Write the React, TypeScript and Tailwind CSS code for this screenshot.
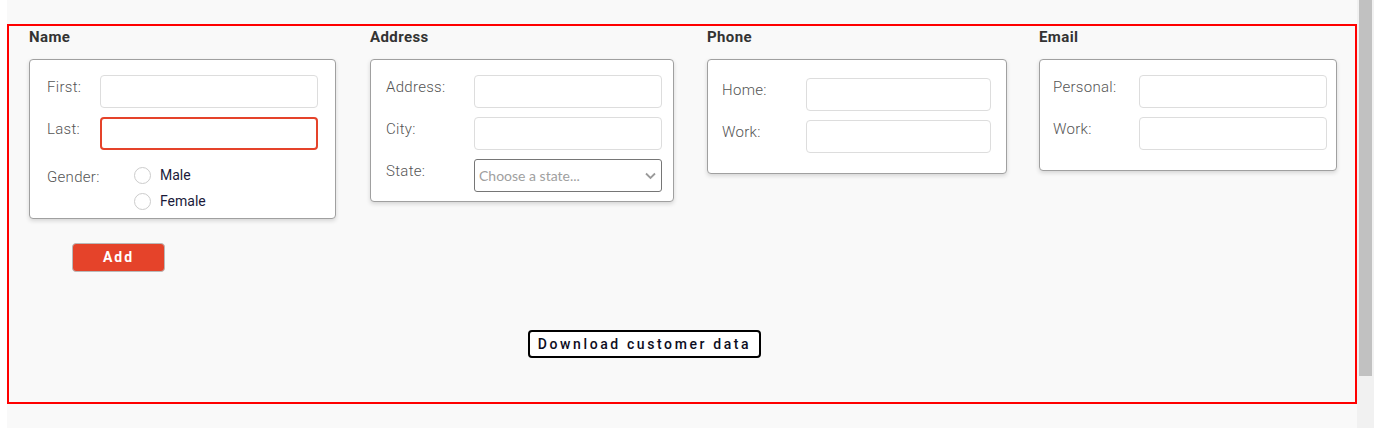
import React from "react";

const font = { fontFamily: "Roboto, 'Liberation Sans', sans-serif" };

function Field({
  label,
  labelW,
  inputW,
  active,
}: {
  label: string;
  labelW: string;
  inputW: string;
  active?: boolean;
}) {
  return (
    <div className="flex items-start">
      <label className={`${labelW} pt-[2px] text-[15px] leading-[20px] font-light text-[#555] tracking-[0.3px]`}>
        {label}
      </label>
      <input
        type="text"
        className={`${inputW} h-[33px] rounded-[4px] bg-white outline-none ${
          active ? "border-2 border-[#e5432a]" : "border border-[#dddddd]"
        }`}
      />
    </div>
  );
}

function Radio({ label }: { label: string }) {
  return (
    <div className="flex items-center gap-[9px] h-[26px]">
      <span className="w-[17px] h-[17px] rounded-full border border-[#cccccc] bg-white" />
      <span className="text-[14px] leading-[20px] text-[#1a1a3a]">{label}</span>
    </div>
  );
}

function Heading({ children }: { children: React.ReactNode }) {
  return (
    <h2 className="h-[19px] text-[15px] leading-[19px] font-bold text-[#333] tracking-[0.4px]">{children}</h2>
  );
}

const card = "bg-white border border-[#a0a0a0] rounded-[4px] shadow-[0_2px_4px_rgba(0,0,0,0.14)]";

export default function App() {
  return (
    <div className="flex h-[428px] w-[1382px] bg-white overflow-hidden" style={font}>
      <div className="w-[7px]" />
      <main className="w-[1350px] bg-[#f9f9f9] pt-[24px]">
        <section className="h-[380px] border-2 border-[#ff0000] pt-[2px] pl-[20px]">
          <div className="flex items-start">
            {/* Name */}
            <div className="w-[341px]">
              <Heading>Name</Heading>
              <div className={`${card} w-[307px] mt-[12px] pt-[15px] pl-[17px] pb-[4px]`}>
                <div className="flex flex-col gap-[9px]">
                  <Field label="First:" labelW="w-[53px]" inputW="w-[218px]" />
                  <Field label="Last:" labelW="w-[53px]" inputW="w-[218px]" active />
                </div>
                <div className="flex items-start mt-[3px]">
                  <span className="w-[87px] pt-[14px] text-[15px] leading-[20px] font-light text-[#555] tracking-[0.3px]">
                    Gender:
                  </span>
                  <div className="flex flex-col pt-[9px]">
                    <Radio label="Male" />
                    <Radio label="Female" />
                  </div>
                </div>
              </div>
            </div>

            {/* Address */}
            <div className="w-[337px]">
              <Heading>Address</Heading>
              <div className={`${card} w-[304px] mt-[12px] pt-[15px] pl-[15px] pb-[9px]`}>
                <div className="flex flex-col gap-[9px]">
                  <Field label="Address:" labelW="w-[88px]" inputW="w-[188px]" />
                  <Field label="City:" labelW="w-[88px]" inputW="w-[188px]" />
                  <div className="flex items-start">
                    <label className="w-[88px] pt-[2px] text-[15px] leading-[20px] font-light text-[#555] tracking-[0.3px]">
                      State:
                    </label>
                    <div className="relative w-[188px] h-[33px] rounded-[3px] border border-[#767676] bg-white flex items-center pl-[4px]">
                      <span
                        className="text-[14px] text-[#a0a0a0]"
                        style={{ fontFamily: "Lato, 'Liberation Sans', sans-serif" }}
                      >
                        Choose a state...
                      </span>
                      <svg
                        className="absolute right-[5px] top-[12px]"
                        width="11"
                        height="8"
                        viewBox="0 0 11 8"
                        fill="none"
                        stroke="#9a9a9a"
                        strokeWidth="1.8"
                      >
                        <path d="M1 1.5l4.5 4.5 4.5-4.5" />
                      </svg>
                    </div>
                  </div>
                </div>
              </div>
            </div>

            {/* Phone */}
            <div className="w-[332px]">
              <Heading>Phone</Heading>
              <div className={`${card} w-[300px] mt-[12px] pt-[18px] pl-[14px] pb-[20px]`}>
                <div className="flex flex-col gap-[9px]">
                  <Field label="Home:" labelW="w-[84px]" inputW="w-[185px]" />
                  <Field label="Work:" labelW="w-[84px]" inputW="w-[185px]" />
                </div>
              </div>
            </div>

            {/* Email */}
            <div className="w-[298px]">
              <Heading>Email</Heading>
              <div className={`${card} w-[298px] mt-[12px] pt-[15px] pl-[13px] pb-[20px]`}>
                <div className="flex flex-col gap-[9px]">
                  <Field label="Personal:" labelW="w-[86px]" inputW="w-[188px]" />
                  <Field label="Work:" labelW="w-[86px]" inputW="w-[188px]" />
                </div>
              </div>
            </div>
          </div>

          <button className="block mt-[24px] ml-[43px] w-[93px] h-[29px] rounded-[4px] bg-[#e5432a] border border-[#b9b9b9] text-white text-[14px] font-bold tracking-[2px]">
            Add
          </button>

          <button className="block mt-[58px] ml-[499px] w-[233px] h-[28px] rounded-[4px] bg-white border-2 border-black text-[14px] font-medium tracking-[2.6px] text-[#0d0d22]">
            Download customer data
          </button>
        </section>
      </main>
      <div className="w-[17px] bg-[#f1f1f1] flex justify-center">
        <div className="w-[13px] h-[376px] bg-[#c1c1c1]" />
      </div>
      <div className="flex-1 bg-white" />
    </div>
  );
}
